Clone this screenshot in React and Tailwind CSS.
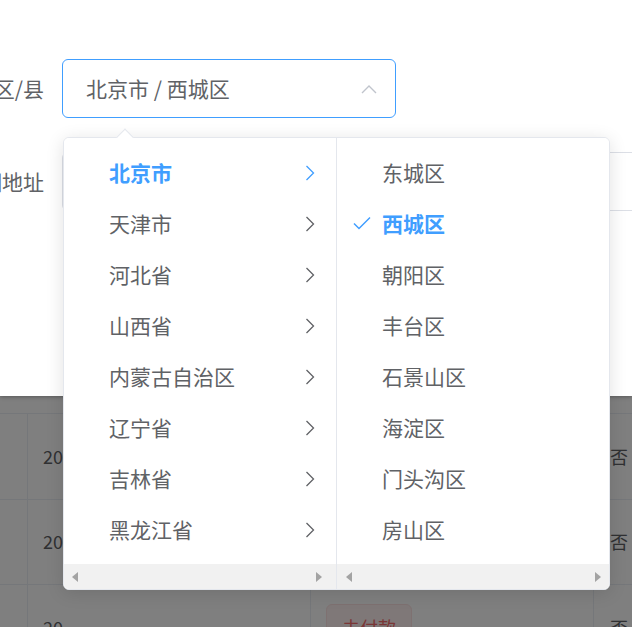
import React from "react";

const provinces = ["北京市", "天津市", "河北省", "山西省", "内蒙古自治区", "辽宁省", "吉林省", "黑龙江省"];
const districts = ["东城区", "西城区", "朝阳区", "丰台区", "石景山区", "海淀区", "门头沟区", "房山区"];

function ChevronRight({ className }) {
  return (
    <svg width="10" height="16" viewBox="0 0 10 16" className={className}>
      <polyline points="1.5,1 8.5,8 1.5,15" fill="none" stroke="currentColor" strokeWidth="1.3" />
    </svg>
  );
}

function Check() {
  return (
    <svg width="18" height="14" viewBox="0 0 18 14" className="text-[#409eff]">
      <polyline points="1,7.5 6,12.5 17,1.5" fill="none" stroke="currentColor" strokeWidth="1.5" />
    </svg>
  );
}

function ScrollBar({ leftPad, rightPad }) {
  return (
    <div className="h-[25px] bg-[#f1f1f1] flex items-center justify-between" style={{ paddingLeft: leftPad, paddingRight: rightPad }}>
      <div className="w-0 h-0 border-y-[5px] border-y-transparent border-r-[6px] border-r-[#a3a3a3]" />
      <div className="w-0 h-0 border-y-[5px] border-y-transparent border-l-[6px] border-l-[#a3a3a3]" />
    </div>
  );
}

function TableRow({ h }) {
  return (
    <div className="grid grid-cols-[27px_283px_283px_1fr] border-t border-[#ebeef5]" style={{ height: h }}>
      <div />
      <div className="border-l border-[#ebeef5] flex items-center pl-[15px] text-[18px] text-[#606266] whitespace-nowrap overflow-hidden">
        20
      </div>
      <div className="border-l border-[#ebeef5] flex items-center pl-[15px]">
        <div className="h-[48px] px-[15px] flex items-center border border-[#fde2e2] bg-[#fef0f0] text-[#f56c6c] text-[18px] rounded-[6px]">
          未付款
        </div>
      </div>
      <div className="border-l border-[#ebeef5] flex items-center pl-[16px] text-[18px] text-[#606266]">否</div>
    </div>
  );
}

export default function App() {
  return (
    <div className="relative w-[632px] h-[627px] overflow-hidden bg-white font-['Noto_Sans_CJK_SC','Microsoft_YaHei',sans-serif]">
      {/* underlying page table */}
      <div className="pt-[413px]">
        <TableRow h="85.5px" />
        <TableRow h="85.5px" />
        <TableRow h="86px" />
      </div>

      {/* modal mask */}
      <div className="absolute inset-0 bg-black/50" />

      {/* dialog */}
      <div className="absolute left-0 top-0 right-0 h-[396px] bg-white shadow-[0_1px_4px_rgba(0,0,0,0.3)]">
        <div className="pt-[59px] flex flex-col gap-[34px]">
          <div className="flex items-center h-[59px]">
            <div className="w-[62px] pr-[18px] flex justify-end shrink-0">
              <span className="whitespace-nowrap text-[21px] text-[#606266]">所在区/县</span>
            </div>
            <div className="w-[334px] h-[59px] border border-[#409eff] rounded-[6px] flex items-center pl-[23px] pr-[18px] justify-between">
              <span className="text-[21px] text-[#606266]">北京市 / 西城区</span>
              <svg width="16" height="10" viewBox="0 0 16 10" className="text-[#c0c4cc]">
                <polyline points="1,9 8,2 15,9" fill="none" stroke="currentColor" strokeWidth="1.4" />
              </svg>
            </div>
          </div>
          <div className="flex items-center h-[59px]">
            <div className="w-[62px] pr-[18px] flex justify-end shrink-0">
              <span className="whitespace-nowrap text-[21px] text-[#606266]">详细地址</span>
            </div>
            <div className="w-[620px] shrink-0 h-[59px] border border-[#dcdfe6] rounded-[6px]" />
          </div>
        </div>
      </div>

      {/* cascader dropdown */}
      <div className="absolute left-[63px] top-[137px] w-[547px] h-[453px] bg-white border border-[#e4e7ed] rounded-[6px] shadow-[0_3px_18px_rgba(0,0,0,0.12)]">
        <div className="absolute left-[55px] top-[-7px] w-[12px] h-[12px] bg-white border-l border-t border-[#e4e7ed] rotate-45" />
        <div className="relative h-full flex rounded-[5px] overflow-hidden bg-white">
          <div className="w-[273px] border-r border-[#e4e7ed] flex flex-col">
            <div className="flex-1 pt-[9px] overflow-hidden">
              {provinces.map((p, i) => (
                <div key={p} className="h-[51px] flex items-center justify-between pl-[45px] pr-[21px]">
                  <span className={i === 0 ? "text-[21px] font-bold text-[#409eff]" : "text-[21px] text-[#606266]"}>{p}</span>
                  <ChevronRight className={i === 0 ? "text-[#409eff]" : "text-[#606266]"} />
                </div>
              ))}
            </div>
            <ScrollBar leftPad="8px" rightPad="14px" />
          </div>
          <div className="flex-1 flex flex-col">
            <div className="flex-1 pt-[9px] overflow-hidden">
              {districts.map((d, i) => (
                <div key={d} className="relative h-[51px] flex items-center pl-[45px]">
                  {i === 1 && (
                    <span className="absolute left-[16px] top-[18px]">
                      <Check />
                    </span>
                  )}
                  <span className={i === 1 ? "text-[21px] font-bold text-[#409eff]" : "text-[21px] text-[#606266]"}>{d}</span>
                </div>
              ))}
            </div>
            <ScrollBar leftPad="9px" rightPad="8px" />
          </div>
        </div>
      </div>
    </div>
  );
}
